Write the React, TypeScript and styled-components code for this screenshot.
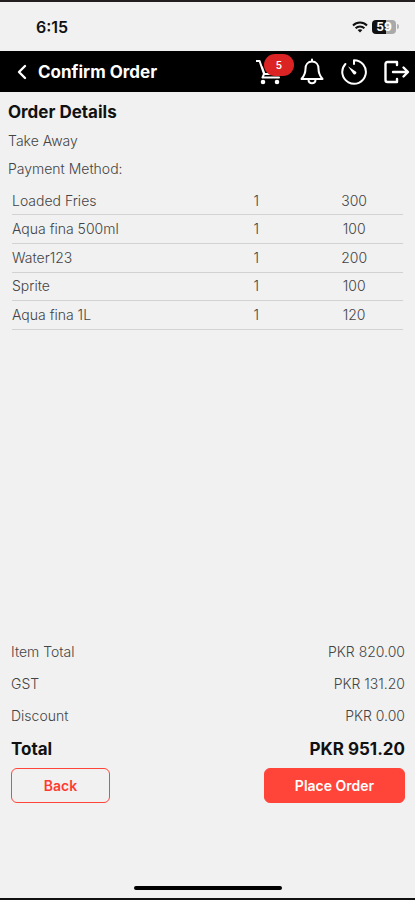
import React from "react";
import styled, { createGlobalStyle } from "styled-components";

const GlobalStyle = createGlobalStyle`
  * { box-sizing: border-box; }
  body {
    margin: 0;
    background: #f1f1f1;
    color: #111;
    font-family: Inter, "Liberation Sans", sans-serif;
  }
  button { font-family: inherit; cursor: pointer; }
`;

const Screen = styled.div`
  display: flex;
  flex-direction: column;
  min-height: 100vh;
  border-top: 2px solid #231f20;
  border-bottom: 2px solid #111;
`;

const StatusBar = styled.div`
  display: flex;
  align-items: center;
  justify-content: space-between;
  height: 49px;
  padding: 0 16px 0 36px;
`;

const Clock = styled.time`
  font-size: 16px;
  font-weight: 600;
`;

const StatusIcons = styled.div`
  display: flex;
  align-items: center;
  gap: 4px;
`;

const Battery = styled.span`
  display: flex;
  align-items: center;
  gap: 1px;
`;

const BatteryLevel = styled.span`
  width: 24px;
  height: 14px;
  border-radius: 4px;
  background: linear-gradient(90deg, #111 59%, #a9a9a9 59%);
  color: #fff;
  font-size: 12px;
  font-weight: 700;
  line-height: 14px;
  text-align: center;
`;

const BatteryTip = styled.span`
  width: 2px;
  height: 5px;
  border-radius: 0 2px 2px 0;
  background: #b5b5b5;
`;

const Header = styled.header`
  display: flex;
  align-items: center;
  justify-content: space-between;
  height: 41px;
  padding: 0 5px 0 16px;
  background: #000;
  color: #fff;
`;

const HeaderTitle = styled.div`
  display: flex;
  align-items: center;
  gap: 8px;
`;

const Title = styled.h1`
  margin: 0;
  font-size: 17px;
  font-weight: 700;
  line-height: 24px;
`;

const HeaderActions = styled.div`
  display: flex;
  align-items: center;
  gap: 14px;
`;

const IconButton = styled.button`
  position: relative;
  display: flex;
  padding: 0;
  border: 0;
  background: none;
  color: inherit;
`;

const Badge = styled.span`
  position: absolute;
  top: -4px;
  left: 8px;
  width: 30px;
  height: 22px;
  border-radius: 11px;
  background: #dc2323;
  color: #fff;
  font-size: 10px;
  font-weight: 600;
  line-height: 22px;
  text-align: center;
`;

const Details = styled.main`
  flex: 1;
  padding: 8px;
`;

const SectionTitle = styled.h2`
  margin: 0 0 3px;
  font-size: 17px;
  font-weight: 700;
  line-height: 24px;
`;

const Info = styled.p`
  margin: 0;
  color: #444;
  font-size: 14px;
  font-weight: 300;
  line-height: 28px;
`;

const ItemsTable = styled.table`
  width: calc(100% - 8px);
  height: 143px;
  margin: 4px 4px 0;
  border-collapse: collapse;
  table-layout: fixed;
`;

const Cell = styled.td<{ $width: string; $center?: boolean }>`
  width: ${(p) => p.$width};
  padding: 0;
  border-bottom: 1px solid #d2d2d2;
  color: #444;
  font-size: 14px;
  font-weight: 300;
  line-height: 16px;
  text-align: ${(p) => (p.$center ? "center" : "left")};
`;

const Footer = styled.footer`
  padding: 0 10px 8px 11px;
`;

const Summary = styled.dl`
  margin: 0 0 2px;
`;

const SummaryRow = styled.div<{ $total?: boolean }>`
  display: flex;
  justify-content: space-between;
  color: ${(p) => (p.$total ? "#111" : "#444")};
  font-size: ${(p) => (p.$total ? "17px" : "14px")};
  font-weight: ${(p) => (p.$total ? 700 : 300)};
  line-height: ${(p) => (p.$total ? "34px" : "32px")};
`;

const Amount = styled.dd`
  margin: 0;
`;

const Buttons = styled.div`
  display: flex;
  justify-content: space-between;
`;

const ActionButton = styled.button<{ $primary?: boolean }>`
  width: ${(p) => (p.$primary ? "141px" : "99px")};
  height: 35px;
  padding: 0;
  border: 1px solid #ff453a;
  border-radius: 6px;
  background: ${(p) => (p.$primary ? "#ff453a" : "transparent")};
  color: ${(p) => (p.$primary ? "#fff" : "#ff3b30")};
  font-size: 14px;
  font-weight: 600;
`;

const HomeArea = styled.div`
  display: flex;
  align-items: flex-end;
  justify-content: center;
  height: 87px;
  padding-bottom: 8px;
`;

const HomeIndicator = styled.div`
  width: 148px;
  height: 4px;
  border-radius: 2px;
  background: #000;
`;

const items = [
  { name: "Loaded Fries", quantity: 1, price: 300 },
  { name: "Aqua fina 500ml", quantity: 1, price: 100 },
  { name: "Water123", quantity: 1, price: 200 },
  { name: "Sprite", quantity: 1, price: 100 },
  { name: "Aqua fina 1L", quantity: 1, price: 120 },
];

const summary = [
  { label: "Item Total", amount: "PKR 820.00" },
  { label: "GST", amount: "PKR 131.20" },
  { label: "Discount", amount: "PKR 0.00" },
  { label: "Total", amount: "PKR 951.20", total: true },
];

const stroke = {
  fill: "none",
  stroke: "currentColor",
  strokeWidth: 2,
  strokeLinecap: "round" as const,
  strokeLinejoin: "round" as const,
};

const WifiIcon = () => (
  <svg width="16" height="12" viewBox="0 0 16 12" fill="none" stroke="#111" strokeWidth="2">
    <path d="M1 4.5C5 .6 11 .6 15 4.5M3.6 7.2C6 4.8 10 4.8 12.4 7.2" />
    <path d="M8 11.5 5.6 9.1C7 7.9 9 7.9 10.4 9.1Z" fill="#111" stroke="none" />
  </svg>
);

const BackIcon = () => (
  <svg width="14" height="16" viewBox="0 0 14 16" {...stroke} strokeWidth="2.4">
    <path d="M9 2 3 8l6 6" />
  </svg>
);

const CartIcon = () => (
  <svg width="28" height="28" viewBox="0 0 28 28" {...stroke}>
    <path d="M0 3h3.600l4.400 13h13.500l2-4M8 16l-1.500 3.500h16.500M6 9l2.500 7" />
    <circle cx="7" cy="24" r="1.300" fill="currentColor" />
    <circle cx="21" cy="24" r="1.300" fill="currentColor" />
  </svg>
);

const BellIcon = () => (
  <svg width="28" height="28" viewBox="0 0 28 28" {...stroke}>
    <path d="M14 1.500v2M14 3.500c-4 0-6.500 3.200-6.500 7.200 0 5-1.500 7.300-4 10.300h21c-2.500-3-4-5.300-4-10.300 0-4-2.500-7.200-6.500-7.200Z" />
    <path d="M10.500 21.500c0 5 7 5 7 0" />
  </svg>
);

const TimerIcon = () => (
  <svg width="28" height="28" viewBox="0 0 28 28" {...stroke}>
    <path d="M14 6V2.200A11.800 11.800 0 1 1 5.400 6" />
    <path d="M8 8.300 15.300 13.200a1.700 1.700 0 1 1-2.300 2.300Z" fill="currentColor" stroke="none" />
  </svg>
);

const LogoutIcon = () => (
  <svg width="28" height="28" viewBox="0 0 28 28" {...stroke} strokeWidth="2.400">
    <path d="M15 7V4H5.500Q3.500 4 3.500 6v16q0 2 2 2H15v-3M11 14h14.500M21.500 9.500 26 14l-4.500 4.500" />
  </svg>
);

export default function App() {
  return (
    <Screen>
      <GlobalStyle />
      <StatusBar>
        <Clock>6:15</Clock>
        <StatusIcons>
          <WifiIcon />
          <Battery>
            <BatteryLevel>59</BatteryLevel>
            <BatteryTip />
          </Battery>
        </StatusIcons>
      </StatusBar>
      <Header>
        <HeaderTitle>
          <IconButton type="button" aria-label="Go back">
            <BackIcon />
          </IconButton>
          <Title>Confirm Order</Title>
        </HeaderTitle>
        <HeaderActions>
          <IconButton type="button" aria-label="Cart, 5 items">
            <CartIcon />
            <Badge>5</Badge>
          </IconButton>
          <IconButton type="button" aria-label="Notifications">
            <BellIcon />
          </IconButton>
          <IconButton type="button" aria-label="Order history">
            <TimerIcon />
          </IconButton>
          <IconButton type="button" aria-label="Log out">
            <LogoutIcon />
          </IconButton>
        </HeaderActions>
      </Header>
      <Details>
        <SectionTitle>Order Details</SectionTitle>
        <Info>Take Away</Info>
        <Info>Payment Method:</Info>
        <ItemsTable>
          <tbody>
            {items.map((item) => (
              <tr key={item.name}>
                <Cell $width="50%">{item.name}</Cell>
                <Cell $width="25%" $center>
                  {item.quantity}
                </Cell>
                <Cell $width="25%" $center>
                  {item.price}
                </Cell>
              </tr>
            ))}
          </tbody>
        </ItemsTable>
      </Details>
      <Footer>
        <Summary>
          {summary.map((row) => (
            <SummaryRow key={row.label} $total={row.total}>
              <dt>{row.label}</dt>
              <Amount>{row.amount}</Amount>
            </SummaryRow>
          ))}
        </Summary>
        <Buttons>
          <ActionButton type="button">Back</ActionButton>
          <ActionButton type="button" $primary>
            Place Order
          </ActionButton>
        </Buttons>
      </Footer>
      <HomeArea>
        <HomeIndicator />
      </HomeArea>
    </Screen>
  );
}
